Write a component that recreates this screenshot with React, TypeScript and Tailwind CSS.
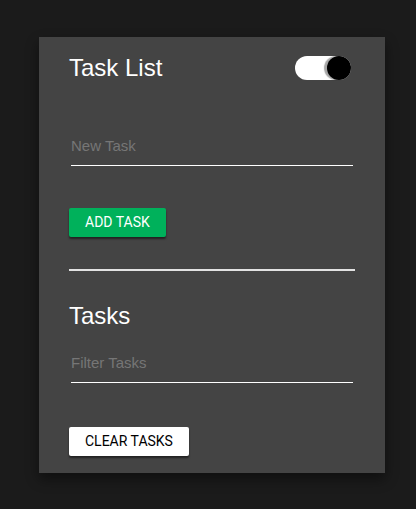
const App = () => {
  return (
    <div className="min-h-[509px] w-full bg-[#1b1b1b] pt-[37px] pl-[39px]">
      <div className="w-[346px] bg-[#444444] px-[30px] pt-[17px] pb-[17px] shadow-[0_6px_12px_rgba(0,0,0,0.45)] font-['Liberation_Sans',Arial,sans-serif]">
        {/* header */}
        <div className="flex items-center justify-between h-[28px]">
          <h1 className="text-[24px] leading-[28px] text-white">Task List</h1>
          <div className="relative mr-[4px] h-[24px] w-[56px] rounded-full bg-white">
            <div className="absolute right-0 top-0 h-[24px] w-[24px] rounded-full bg-black shadow-[-3px_0_1px_rgba(0,0,0,0.35)]"></div>
          </div>
        </div>

        <input
          type="text"
          placeholder="New Task"
          className="mx-[2px] mt-[44px] block h-[40px] w-[282px] border-b border-white bg-transparent text-[15px] text-white outline-none placeholder:text-[#767676]"
        />

        <button className="mt-[42px] block h-[29px] rounded-[2px] bg-[#00b15b] px-4 font-['Roboto',sans-serif] text-[14px] text-white shadow-[0_2px_2px_rgba(0,0,0,0.5)]">
          ADD TASK
        </button>

        <div className="mt-[32px] h-[2px] bg-[#e2e2e2]"></div>

        <h2 className="mt-[31px] text-[24px] leading-[28px] text-white">Tasks</h2>

        <input
          type="text"
          placeholder="Filter Tasks"
          className="mx-[2px] mt-[13px] block h-[40px] w-[282px] border-b border-white bg-transparent text-[15px] text-white outline-none placeholder:text-[#767676]"
        />

        <button className="mt-[44px] block h-[29px] rounded-[2px] bg-white px-4 font-['Roboto',sans-serif] text-[14px] text-black shadow-[0_2px_2px_rgba(0,0,0,0.5)]">
          CLEAR TASKS
        </button>
      </div>
    </div>
  );
};

export default App;
